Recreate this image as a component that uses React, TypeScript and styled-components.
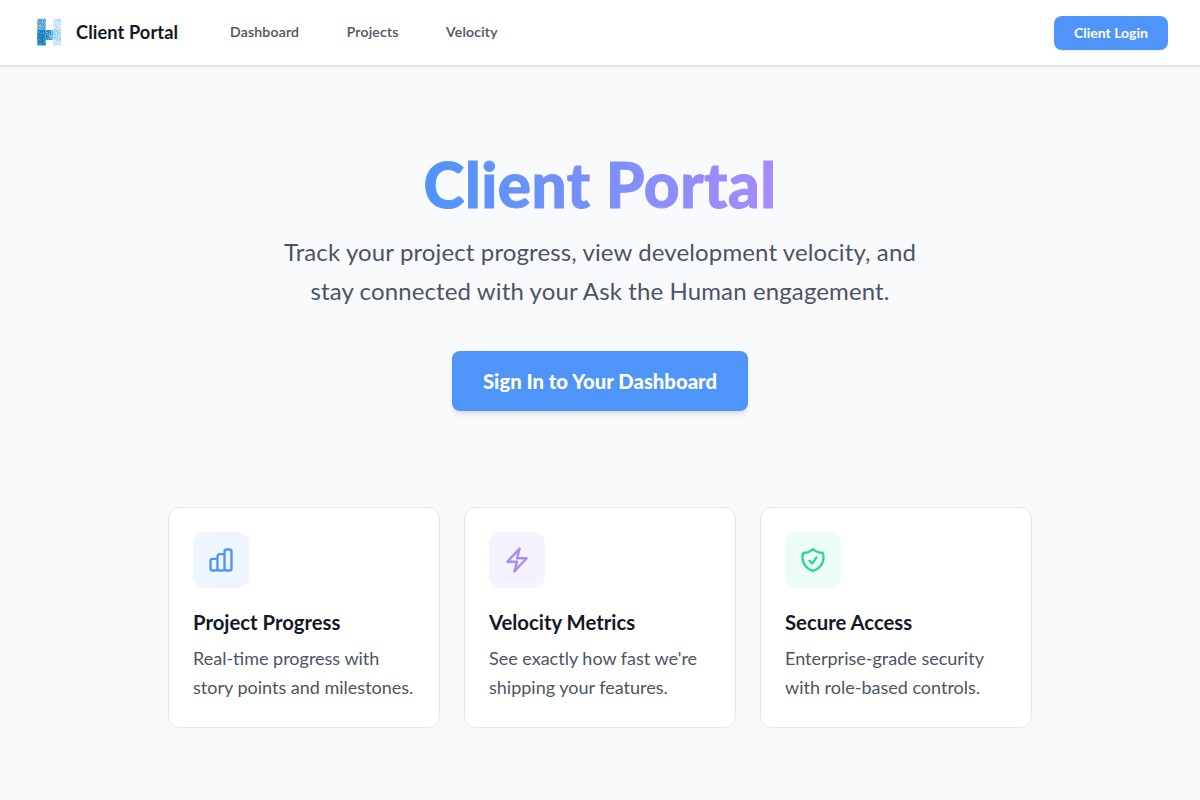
import React from "react";
import styled, { createGlobalStyle } from "styled-components";

const Global = createGlobalStyle`
  html, body { margin: 0; padding: 0; background: #f9fafb; }
  body { font-family: Lato, "Noto Sans", sans-serif; }
  * { box-sizing: border-box; }
`;
const Page = styled.div`
  width: 1200px; height: 800px; overflow: hidden; background: #f9fafb; display: flex; flex-direction: column;
`;
const Header = styled.header`
  height: 65px; flex: none; background: #fff; display: flex; align-items: center; padding: 0 32px 1px 36px;
  box-shadow: 0 1px 3px rgba(0,0,0,.12), 0 1px 2px rgba(0,0,0,.06);
`;
const Brand = styled.div`
  display: flex; align-items: center; gap: 15px; font-size: 18.2px; font-weight: 700; color: #111827; width: 194px; letter-spacing: .1px;
`;
const Nav = styled.nav`display: flex; gap: 47.5px; flex: 1; padding-bottom: 2px;`;
const NavLink = styled.a`font-size: 14px; font-weight: 500; color: #4b5563; letter-spacing: .25px; -webkit-text-stroke: .2px #4b5563;`;
const LoginButton = styled.button`
  width: 114px; height: 34px; margin-top: 2px; padding: 0 0 1px; border: 0; border-radius: 8px; background: #4f94f9; color: #fff; font: 700 14px Lato, sans-serif;
  box-shadow: 0 1px 2px rgba(0,0,0,.08);
`;
const Hero = styled.section`display: flex; flex-direction: column; align-items: center; padding-top: 83px;`;
const Title = styled.h1`
  margin: 0; font-size: 62px; line-height: 72px; font-weight: 900; letter-spacing: .5px; -webkit-text-stroke: 1px transparent;
  background: linear-gradient(90deg, #4f94f9, #a78bfa); -webkit-background-clip: text; background-clip: text; color: transparent;
`;
const Subtitle = styled.p`
  margin: 12px 0 0; width: 680px; text-align: center; font-size: 24px; line-height: 39px; color: #4b5563; letter-spacing: .12px;
`;
const Cta = styled.button`
  margin-top: 41px; width: 296px; height: 60px; padding: 0; border: 0; border-radius: 8px; background: #4f94f9; color: #fff;
  font: 900 20.3px Lato, sans-serif; box-shadow: 0 4px 6px -1px rgba(0,0,0,.1), 0 2px 4px -2px rgba(0,0,0,.1);
`;
const Cards = styled.section`display: grid; grid-template-columns: repeat(3, 272px); gap: 24px; justify-content: center; margin-top: 96px;`;
const Card = styled.article`
  height: 221px; background: #fff; border: 1px solid #e5e7eb; border-radius: 12px; padding: 24px;
`;
const IconBox = styled.div<{ $bg: string; $fg: string }>`
  width: 56px; height: 56px; border-radius: 12px; background: ${p => p.$bg}; color: ${p => p.$fg};
  display: flex; align-items: center; justify-content: center;
`;
const CardTitle = styled.h3`margin: 21px 0 0; font-size: 20.3px; line-height: 26px; font-weight: 700; color: #111827;`;
const CardText = styled.p`margin: 9px 0 0; font-size: 18px; line-height: 29px; color: #4b5563; white-space: pre-line;`;

const Icon = ({ d }: { d: string }) => (
  <svg width="28" height="28" viewBox="0 0 24 24" fill="none" stroke="currentColor" strokeWidth="2" strokeLinecap="round" strokeLinejoin="round"><path d={d} /></svg>
);

function Logo() {
  const cells: React.ReactNode[] = [];
  let seed = 11;
  const rnd = () => { seed = (seed * 16807) % 2147483647; return seed / 2147483647; };
  for (let y = 0; y < 28; y++) for (let x = 0; x < 25; x++) {
    const inBar = y >= 12 && y <= 21;
    const left = x >= 1 && x <= 9, right = x >= 17 && x <= 24, bar = inBar && x > 9 && x < 17;
    if (!left && !right && !bar) continue;
    const edgeY = y < 1 || y > 26 ? 0.4 : 1;
    const edgeX = x === 1 || x === 9 ? 0.75 : 1;
    const base = right ? (inBar ? 0.5 : 0.3) : left ? (inBar || y > 21 ? 0.92 : 0.62) : 0.85 - (x - 10) * 0.05;
    const o = Math.max(0.04, Math.min(1, (base + (rnd() - 0.5) * 0.45) * edgeY * edgeX));
    cells.push(<rect key={`${x}-${y}`} x={x} y={y} width="1" height="1" fill={right ? "#5ab6e8" : "#0b7bbd"} opacity={o} />);
  }
  return <svg width="25" height="28" viewBox="0 0 25 28" shapeRendering="crispEdges">{cells}</svg>;
}

const cards = [
  { bg: "#eff6ff", fg: "#4f94f9", title: "Project Progress", text: "Real-time progress with\nstory points and milestones.",
    d: "M9 19v-6a2 2 0 00-2-2H5a2 2 0 00-2 2v6a2 2 0 002 2h2a2 2 0 002-2zm0 0V9a2 2 0 012-2h2a2 2 0 012 2v10m-6 0a2 2 0 002 2h2a2 2 0 002-2m0 0V5a2 2 0 012-2h2a2 2 0 012 2v14a2 2 0 01-2 2h-2a2 2 0 01-2-2z" },
  { bg: "#f5f3ff", fg: "#a78bfa", title: "Velocity Metrics", text: "See exactly how fast we're\nshipping your features.",
    d: "M3.75 13.5l10.5-11.25L12 10.5h8.25L9.75 21.75 12 13.5H3.75z" },
  { bg: "#ecfdf5", fg: "#34d399", title: "Secure Access", text: "Enterprise-grade security\nwith role-based controls.",
    d: "M9 12.75L11.25 15 15 9.75m-3-7.036A11.959 11.959 0 013.598 6 11.99 11.99 0 003 9.749c0 5.592 3.824 10.29 9 11.623 5.176-1.332 9-6.03 9-11.622 0-1.31-.21-2.571-.598-3.751h-.152c-3.196 0-6.1-1.248-8.25-3.286z" },
];

export default function App() {
  return (
    <Page>
      <Global />
      <Header>
        <Brand><Logo />Client Portal</Brand>
        <Nav><NavLink>Dashboard</NavLink><NavLink>Projects</NavLink><NavLink>Velocity</NavLink></Nav>
        <LoginButton>Client Login</LoginButton>
      </Header>
      <Hero>
        <Title>Client Portal</Title>
        <Subtitle>Track your project progress, view development velocity, and stay connected with your Ask the Human engagement.</Subtitle>
        <Cta>Sign In to Your Dashboard</Cta>
      </Hero>
      <Cards>
        {cards.map(c => (
          <Card key={c.title}>
            <IconBox $bg={c.bg} $fg={c.fg}><Icon d={c.d} /></IconBox>
            <CardTitle>{c.title}</CardTitle>
            <CardText>{c.text}</CardText>
          </Card>
        ))}
      </Cards>
    </Page>
  );
}
